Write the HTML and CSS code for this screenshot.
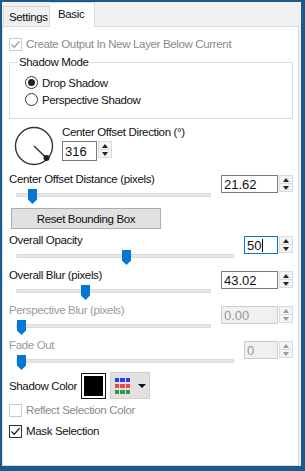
FILE: index.html
```html
<!DOCTYPE html>
<html lang="en">
<head>
    <meta charset="UTF-8">
    <title>Drop Shadow</title>
    <link rel="stylesheet" href="styles.css">
</head>
<body>
<div class="window">
    <div class="tabs">
        <div class="tab">Settings</div>
        <div class="tab active">Basic</div>
    </div>

    <div class="panel">
        <label class="check disabled row-create">
            <span class="box"><svg width="11" height="11" viewBox="0 0 11 11"><path d="M1.5 5.5 L4.2 8.3 L9.6 2.2" fill="none" stroke="#a0a0a0" stroke-width="1.3"/></svg></span>
            Create Output In New Layer Below Current
        </label>

        <fieldset class="group">
            <legend>Shadow Mode</legend>
            <label class="radio"><span class="dot on"></span>Drop Shadow</label>
            <label class="radio"><span class="dot"></span>Perspective Shadow</label>
        </fieldset>

        <div class="dial-row">
            <svg class="dial" width="42" height="42" viewBox="0 0 42 42">
                <circle cx="21" cy="21" r="18.5" fill="none" stroke="#333" stroke-width="1.4"/>
                <line x1="21" y1="21" x2="33.5" y2="33" stroke="#333" stroke-width="1.5"/>
                <circle cx="33.5" cy="33" r="3" fill="#222"/>
            </svg>
            <div class="dial-side">
                <div class="label">Center Offset Direction (&deg;)</div>
                <div class="spin narrow">
                    <div class="field">316</div>
                    <div class="arrows"><span class="up"></span><span class="down"></span></div>
                </div>
            </div>
        </div>

        <div class="slider-row wide first">
            <div class="slider-col">
                <div class="label">Center Offset Distance (pixels)</div>
                <div class="track"><span class="thumb" style="left: 11px"></span></div>
            </div>
            <div class="spin">
                <div class="field">21.62</div>
                <div class="arrows"><span class="up"></span><span class="down"></span></div>
            </div>
        </div>

        <button class="reset">Reset Bounding Box</button>

        <div class="slider-row">
            <div class="slider-col">
                <div class="label">Overall Opacity</div>
                <div class="track"><span class="thumb" style="left: 105px"></span></div>
            </div>
            <div class="spin small">
                <div class="field focus">50<span class="caret"></span></div>
                <div class="arrows"><span class="up"></span><span class="down"></span></div>
            </div>
        </div>

        <div class="slider-row wide">
            <div class="slider-col">
                <div class="label">Overall Blur (pixels)</div>
                <div class="track"><span class="thumb" style="left: 64px"></span></div>
            </div>
            <div class="spin">
                <div class="field">43.02</div>
                <div class="arrows"><span class="up"></span><span class="down"></span></div>
            </div>
        </div>

        <div class="slider-row wide disabled">
            <div class="slider-col">
                <div class="label">Perspective Blur (pixels)</div>
                <div class="track"><span class="thumb" style="left: 0px"></span></div>
            </div>
            <div class="spin">
                <div class="field">0.00</div>
                <div class="arrows"><span class="up"></span><span class="down"></span></div>
            </div>
        </div>

        <div class="slider-row disabled">
            <div class="slider-col">
                <div class="label">Fade Out</div>
                <div class="track"><span class="thumb" style="left: 0px"></span></div>
            </div>
            <div class="spin small">
                <div class="field">0</div>
                <div class="arrows"><span class="up"></span><span class="down"></span></div>
            </div>
        </div>

        <div class="color-row">
            <span class="label">Shadow Color</span>
            <span class="swatch"></span>
            <span class="palette">
                <svg width="15" height="16" viewBox="0 0 15 16">
                    <rect x="0" y="0" width="4" height="4" fill="#2a3cf0"/>
                    <rect x="5" y="0" width="5" height="4" fill="#2a3cf0"/>
                    <rect x="11" y="0" width="4" height="4" fill="#2a3cf0"/>
                    <rect x="0" y="6" width="4" height="4" fill="#f04848"/>
                    <rect x="5" y="6" width="5" height="4" fill="#f04848"/>
                    <rect x="11" y="6" width="4" height="4" fill="#f04848"/>
                    <rect x="0" y="12" width="4" height="4" fill="#2f9a40"/>
                    <rect x="5" y="12" width="5" height="4" fill="#2f9a40"/>
                    <rect x="11" y="12" width="4" height="4" fill="#2f9a40"/>
                </svg>
                <svg width="8" height="4" viewBox="0 0 8 4"><path d="M0 0 H8 L4 4 Z" fill="#111"/></svg>
            </span>
        </div>

        <label class="check disabled row-reflect">
            <span class="box"></span>
            Reflect Selection Color
        </label>

        <label class="check row-mask">
            <span class="box"><svg width="11" height="11" viewBox="0 0 11 11"><path d="M1.5 5.5 L4.2 8.3 L9.6 2.2" fill="none" stroke="#222" stroke-width="1.3"/></svg></span>
            Mask Selection
        </label>
    </div>
</div>
</body>
</html>
```

FILE: styles.css
```css
body {
    margin: 0;
    font-family: "Liberation Sans", Arial, sans-serif;
    font-size: 11.5px;
    letter-spacing: -0.35px;
    color: #111;
}
.window {
    width: 305px;
    height: 471px;
    box-sizing: border-box;
    border-style: solid;
    border-color: #1d5a8c;
    border-width: 2px 4px 5px 2px;
    background-color: #f0f0f0;
    display: flex;
    flex-direction: column;
}
.tabs {
    display: flex;
    align-items: flex-end;
    height: 24px;
    padding-left: 1px;
}
.tab {
    box-sizing: border-box;
    width: 47px;
    height: 20px;
    line-height: 20px;
    padding-left: 5px;
    border: 1px solid #d9d9d9;
    border-bottom: none;
    background-color: #f0f0f0;
}
.tab.active {
    width: 45px;
    height: 25px;
    line-height: 22px;
    padding-left: 8px;
    background-color: white;
    margin-bottom: -1px;
    position: relative;
    border-left: none;
}
.panel {
    flex: 1;
    background-color: white;
    border: 1px solid #d9d9d9;
    margin-right: 2px;
    padding: 10px 5px 0 6px;
}
.label {
    line-height: 14px;
    white-space: nowrap;
}
.check {
    display: flex;
    align-items: center;
    gap: 4px;
    height: 14px;
}
.check .box {
    width: 11px;
    height: 11px;
    border: 1px solid #333;
    display: inline-flex;
    background-color: white;
}
.check.disabled {
    color: #8a8a8a;
}
.check.disabled .box {
    border-color: #cccccc;
}
.group {
    margin: 4px 0 0 0;
    padding: 5px 0 10px 15px;
    border: 1px solid #dcdcdc;
}
.group legend {
    padding: 0 2px;
    margin-left: -8px;
    line-height: 14px;
}
.radio {
    display: flex;
    align-items: center;
    gap: 4px;
    height: 17px;
}
.dot {
    width: 11px;
    height: 11px;
    border: 1px solid #333;
    border-radius: 50%;
    background-color: white;
    display: inline-flex;
    align-items: center;
    justify-content: center;
}
.dot.on::after {
    content: "";
    width: 7px;
    height: 7px;
    border-radius: 50%;
    background-color: #222;
}
.dial-row {
    display: flex;
    gap: 7px;
    margin-top: 6px;
    height: 42px;
}
.dial {
    margin-left: 4px;
}
.dial-side {
    display: flex;
    flex-direction: column;
    gap: 2px;
}
.spin {
    display: flex;
    gap: 1px;
    height: 18px;
}
.field {
    width: 57px;
    box-sizing: border-box;
    height: 18px;
    border: 1px solid #7a7a7a;
    background-color: white;
    padding-left: 2px;
    font-size: 13px;
    letter-spacing: 0;
    display: flex;
    align-items: center;
}
.spin.narrow {
    height: 20px;
}
.spin.narrow .field {
    width: 35px;
    height: 20px;
}
.spin.small .field {
    width: 34px;
}
.field.focus {
    border-color: #0078d7;
}
.caret {
    width: 1px;
    height: 13px;
    background-color: #111;
    margin-left: 1px;
}
.arrows {
    display: flex;
    flex-direction: column;
    width: 14px;
    border: 1px solid #dadada;
    box-sizing: border-box;
    height: 17px;
}
.arrows span {
    flex: 1;
    display: flex;
    align-items: center;
    justify-content: center;
    background-color: #f4f4f4;
}
.arrows .up {
    border-bottom: 1px solid #dadada;
}
.arrows .up::after {
    content: "";
    border: 3px solid transparent;
    border-top: none;
    border-bottom: 4px solid #222;
}
.arrows .down::after {
    content: "";
    border: 3px solid transparent;
    border-bottom: none;
    border-top: 4px solid #222;
}
.slider-row {
    display: flex;
    justify-content: space-between;
    align-items: flex-start;
    height: 28px;
    margin-top: 7px;
}
.slider-row.first {
    margin-top: 8px;
}
.slider-col {
    flex: 1;
    margin-top: -3px;
}
.track {
    position: relative;
    height: 2px;
    margin: 7px 0 0 7px;
    background-color: #e6e6e6;
    border: 1px solid #dcdcdc;
    width: 193px;
}
.slider-row:not(.wide) .track {
    width: 216px;
}
.thumb {
    position: absolute;
    top: -5px;
    width: 9px;
    height: 15px;
    background-color: #0078d7;
    clip-path: polygon(0 0, 100% 0, 100% 70%, 50% 100%, 0 70%);
}
.slider-row.disabled {
    color: #9a9a9a;
}
.slider-row.disabled .field {
    background-color: #f0f0f0;
    border-color: #cccccc;
    color: #9a9a9a;
}
.slider-row.disabled .arrows span::after {
    border-top-color: #9a9a9a;
    border-bottom-color: #9a9a9a;
}
.reset {
    display: block;
    margin: 5px 0 0 2px;
    width: 150px;
    height: 21px;
    font-family: inherit;
    font-size: 11.5px;
    letter-spacing: -0.35px;
    color: #111;
    background-color: #e1e1e1;
    border: 1px solid #adadad;
    padding: 0;
}
.color-row {
    display: flex;
    align-items: center;
    margin-top: 3px;
    height: 27px;
}
.color-row .label {
    width: 72px;
}
.swatch {
    box-sizing: border-box;
    width: 25px;
    height: 26px;
    background-color: black;
    border: 1px solid #111;
    box-shadow: inset 0 0 0 2px white;
}
.palette {
    display: flex;
    align-items: center;
    gap: 8px;
    margin-left: 4px;
    width: 40px;
    height: 27px;
    box-sizing: border-box;
    padding-left: 4px;
    background-color: #e1e1e1;
    border: 1px solid #cfcfcf;
}
.row-reflect {
    margin-top: 4px;
}
.row-mask {
    margin-top: 7px;
}
```
